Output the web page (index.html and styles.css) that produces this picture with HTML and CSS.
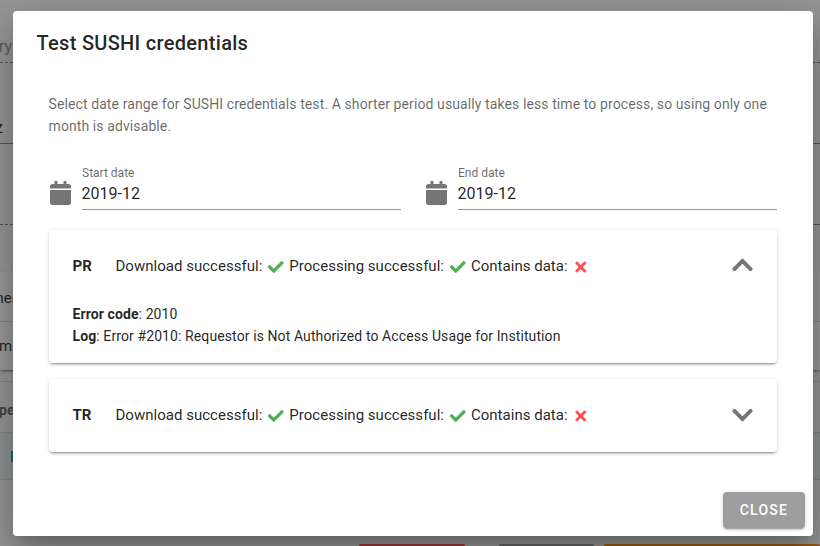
FILE: index.html
```html
<!DOCTYPE html>
<html lang="en">
<head>
<meta charset="utf-8">
<title>Test SUSHI credentials</title>
<link rel="stylesheet" href="styles.css">
</head>
<body>
<svg width="0" height="0" class="sprites" aria-hidden="true">
  <symbol id="check" viewBox="0 0 512 512"><path d="M173.898 439.404l-166.4-166.4c-9.997-9.997-9.997-26.206 0-36.204l36.203-36.204c9.997-9.998 26.207-9.998 36.204 0L192 312.69 432.095 72.596c9.997-9.997 26.207-9.997 36.204 0l36.203 36.204c9.997 9.997 9.997 26.206 0 36.204l-294.4 294.401c-9.998 9.997-26.207 9.997-36.204-.001z"/></symbol>
  <symbol id="times" viewBox="0 0 352 512"><path d="M242.72 256l100.07-100.07c12.28-12.28 12.28-32.19 0-44.48l-22.24-22.24c-12.28-12.28-32.19-12.28-44.48 0L176 189.28 75.93 89.21c-12.28-12.28-32.19-12.28-44.48 0L9.21 111.45c-12.28 12.28-12.28 32.19 0 44.48L109.28 256 9.21 356.07c-12.28 12.28-12.28 32.19 0 44.48l22.24 22.24c12.28 12.28 32.2 12.28 44.48 0L176 322.72l100.07 100.07c12.28 12.28 32.2 12.28 44.48 0l22.24-22.24c12.28-12.28 12.28-32.19 0-44.48L242.72 256z"/></symbol>
  <symbol id="calendar" viewBox="0 0 448 512"><path d="M12 192h424c6.6 0 12 5.4 12 12v260c0 26.5-21.5 48-48 48H48c-26.5 0-48-21.5-48-48V204c0-6.6 5.4-12 12-12zm436-44v-36c0-26.5-21.5-48-48-48h-48V12c0-6.6-5.4-12-12-12h-40c-6.6 0-12 5.4-12 12v52H160V12c0-6.6-5.4-12-12-12h-40c-6.6 0-12 5.4-12 12v52H48C21.5 64 0 85.5 0 112v36c0 6.6 5.4 12 12 12h424c6.6 0 12-5.4 12-12z"/></symbol>
  <symbol id="chevron" viewBox="0 0 448 512"><path d="M207.029 381.476L12.686 187.132c-9.373-9.373-9.373-24.569 0-33.941l22.667-22.667c9.357-9.357 24.522-9.375 33.901-.04L224 284.505l154.745-154.021c9.379-9.335 24.544-9.317 33.901.04l22.667 22.667c9.373 9.373 9.373 24.569 0 33.941L240.971 381.476c-9.373 9.372-24.569 9.372-33.942 0z"/></symbol>
</svg>

<div class="page">
  <div class="line-field dashed muted">ry</div>
  <div class="line-field value">z</div>
  <div class="line-pair"><span class="dashed"></span><span></span></div>
  <div class="panel-list">
    <div class="panel-row first">ner</div>
    <div class="panel-row">m</div>
  </div>
  <div class="table">
    <div class="table-head">pe</div>
    <div class="table-row"><span class="mark"></span></div>
  </div>
  <div class="page-actions"><span class="red"></span><span class="grey"></span><span class="orange"></span></div>
</div>
<div class="scrim"></div>

<div class="dialog" role="dialog">
  <h1 class="title">Test SUSHI credentials</h1>
  <div class="content">
    <p class="intro">Select date range for SUSHI credentials test. A shorter period usually takes less time to process, so using only one month is advisable.</p>
    <div class="dates">
      <div class="date">
        <svg class="calendar"><use href="#calendar"/></svg>
        <div class="input"><label>Start date</label><span>2019-12</span></div>
      </div>
      <div class="date">
        <svg class="calendar"><use href="#calendar"/></svg>
        <div class="input"><label>End date</label><span>2019-12</span></div>
      </div>
    </div>
    <div class="card open">
      <div class="card-head">
        <strong>PR</strong>
        <div class="status">Download successful: <svg class="ok"><use href="#check"/></svg> Processing successful: <svg class="ok"><use href="#check"/></svg> Contains data: <svg class="bad"><use href="#times"/></svg></div>
        <svg class="chevron up"><use href="#chevron"/></svg>
      </div>
      <div class="card-body">
        <div><b>Error code</b>: 2010</div>
        <div><b>Log</b>: Error #2010: Requestor is Not Authorized to Access Usage for Institution</div>
      </div>
    </div>
    <div class="card">
      <div class="card-head">
        <strong>TR</strong>
        <div class="status">Download successful: <svg class="ok"><use href="#check"/></svg> Processing successful: <svg class="ok"><use href="#check"/></svg> Contains data: <svg class="bad"><use href="#times"/></svg></div>
        <svg class="chevron"><use href="#chevron"/></svg>
      </div>
    </div>
  </div>
  <div class="actions"><button class="close">Close</button></div>
</div>
</body>
</html>
```
FILE: styles.css
```css
* { box-sizing: border-box; }

body {
  margin: 0;
  width: 820px;
  height: 546px;
  overflow: hidden;
  position: relative;
  font-family: Roboto, "Liberation Sans", sans-serif;
  font-size: 14px;
  color: rgba(0, 0, 0, .87);
}

.sprites { position: absolute; }

/* Page behind the dialog */
.page {
  height: 546px;
  display: flex;
  flex-direction: column;
  background: #fafafa;
  overflow: hidden;
  white-space: nowrap;
}

.line-field {
  height: 81px;
  flex: none;
  border-bottom: 1px solid #848484;
  display: flex;
  align-items: flex-end;
  padding-bottom: 5px;
  font-size: 16px;
  line-height: 20px;
}
.line-field.muted { height: 63px; color: #8c8c8c; text-indent: -1px; }
.line-field.dashed { border-bottom-style: dashed; }
.line-field.value { text-indent: -5px; }

.line-pair { height: 81px; flex: none; display: flex; }
.line-pair span { flex: 1; border-bottom: 1px solid #848484; }
.line-pair .dashed { border-bottom-style: dashed; }

.panel-list {
  flex: none;
  height: 98px;
  margin-top: 47px;
  background: #fff;
  box-shadow: 0 3px 1px -2px rgba(0, 0, 0, .2), 0 2px 2px rgba(0, 0, 0, .14), 0 1px 5px rgba(0, 0, 0, .12);
}
.panel-row { height: 48px; line-height: 49px; font-size: 15px; text-indent: -1px; }
.panel-row.first { height: 50px; line-height: 53px; border-bottom: 1px solid #ddd; text-indent: -4.5px; }

.table { flex: none; margin-top: 11px; border-top: 1px solid #d8d8d8; }
.table-head {
  height: 51px;
  line-height: 57px;
  font-weight: 700;
  color: #686868;
  border-bottom: 1px solid #d8d8d8;
  text-indent: -1px;
}
.table-row {
  height: 47px;
  display: flex;
  align-items: center;
  background: #e8f2f0;
  border-bottom: 1px solid #d8d8d8;
}
.mark { width: 4px; height: 11px; margin-left: 11px; background: #26a69a; }

.page-actions { display: flex; margin-top: auto; padding-left: 359px; }
.page-actions span { height: 2px; border-radius: 3px 3px 0 0; }
.page-actions .red { width: 106px; margin-right: 34px; background: #ff5252; }
.page-actions .grey { width: 95px; margin-right: 10px; background: #9e9e9e; }
.page-actions .orange { flex: 1; background: #fb8c00; }

.scrim { position: absolute; inset: 0; background: rgba(33, 33, 33, .46); }

/* Dialog */
.dialog {
  position: absolute;
  left: 12.5px;
  top: 11px;
  width: 800px;
  height: 525px;
  background: #fff;
  border-radius: 4px;
  display: flex;
  flex-direction: column;
  box-shadow: 0 11px 15px -7px rgba(0, 0, 0, .2), 0 24px 38px 3px rgba(0, 0, 0, .14), 0 9px 46px 8px rgba(0, 0, 0, .12);
}

.title {
  margin: 0;
  padding: 16px 24px 10px;
  font-size: 20px;
  line-height: 32px;
  font-weight: 500;
  letter-spacing: .3px;
}

.content { padding: 24px 36px 0; }

.intro { margin: 0; line-height: 22px; letter-spacing: .1px; color: rgba(0, 0, 0, .6); }

.dates { display: flex; gap: 24px; margin-top: 28px; }
.date { display: flex; gap: 11px; width: 352px; }
.calendar {
  width: 21px;
  height: 24px;
  margin: 16px 0 0 1px;
  flex: none;
  fill: #757575;
}
.input {
  flex: 1;
  height: 45px;
  border-bottom: 1px solid #949494;
  display: flex;
  flex-direction: column;
}
.input label { padding-left: .5px; font-size: 12px; line-height: 16px; color: rgba(0, 0, 0, .6); }
.input span { font-size: 16px; line-height: 26px; }

.card {
  height: 73px;
  margin-top: 16px;
  padding: 0 24px;
  border-radius: 4px;
  box-shadow: 0 3px 1px -2px rgba(0, 0, 0, .2), 0 2px 2px rgba(0, 0, 0, .14), 0 1px 5px rgba(0, 0, 0, .12);
}
.card.open { height: 133px; margin-top: 20px; }

.card-head { height: 72px; display: flex; align-items: center; font-size: 15px; }
.card-head strong { width: 43px; font-weight: 700; }
.status { flex: 1; white-space: nowrap; letter-spacing: .02px; }
.status svg { width: 19.5px; height: 16px; vertical-align: -4px; }
.ok { fill: #4caf50; }
.bad { fill: #ff5252; }
.chevron { width: 21px; height: 24px; fill: #757575; }
.chevron.up { transform: rotate(180deg); margin-top: -2px; }

.card-body { padding-top: 1px; line-height: 22px; letter-spacing: .1px; }
.card-body b { font-weight: 700; }

.actions { display: flex; justify-content: flex-end; margin-top: auto; padding: 8px; }
.close {
  width: 82px;
  height: 36px;
  padding: 0 0 0 1px;
  border: 0;
  border-radius: 4px;
  background: #9e9e9e;
  color: #fff;
  font: 500 14px/36px Roboto, "Liberation Sans", sans-serif;
  letter-spacing: 1.25px;
  text-transform: uppercase;
  box-shadow: 0 3px 1px -2px rgba(0, 0, 0, .2), 0 2px 2px rgba(0, 0, 0, .14), 0 1px 5px rgba(0, 0, 0, .12);
}
```
